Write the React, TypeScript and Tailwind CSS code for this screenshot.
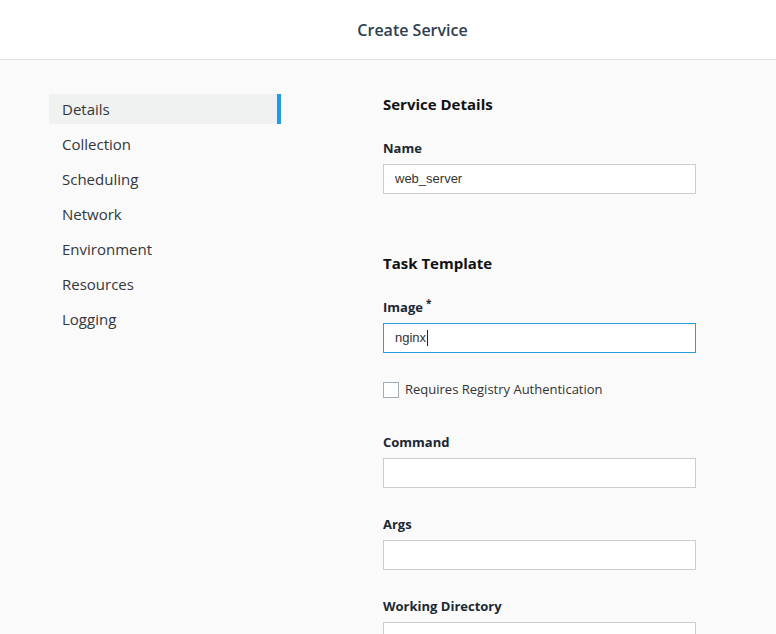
import React from "react";

const nav = ["Details", "Collection", "Scheduling", "Network", "Environment", "Resources", "Logging"];

function Label({ children, mt }: { children: React.ReactNode; mt: string }) {
  return (
    <div className={`${mt} text-[13px] leading-[18px] font-bold text-[#1b2733]`}>{children}</div>
  );
}

function Field({ value, focused }: { value?: string; focused?: boolean }) {
  return (
    <div
      className={`mt-[7px] h-[30px] w-[313px] bg-white flex items-center pl-[11px] text-[13px] text-[#333] ${
        focused ? "border border-[#2d9ae0]" : "border border-[#cccccc]"
      }`}
      style={{ fontFamily: '"Liberation Sans", Arial, sans-serif' }}
    >
      {value}
      {focused && <span className="inline-block w-px h-[16px] bg-[#222] ml-px" />}
    </div>
  );
}

export default function App() {
  return (
    <div
      className="w-[776px] h-[634px] overflow-hidden bg-[#fafafa]"
      style={{ fontFamily: '"Open Sans", "Noto Sans", sans-serif' }}
    >
      <div className="h-[60px] bg-white border-b border-[#e3e3e3] flex items-center justify-center">
        <div className="text-[16px] font-semibold text-[#2e3e50] ml-[49px]">Create Service</div>
      </div>
      <div className="flex pt-[34px]">
        <div className="ml-[49px] w-[232px] flex flex-col gap-[5px]">
          {nav.map((n, i) => (
            <div
              key={n}
              className={`h-[30px] flex items-center pl-[13px] text-[15px] text-[#33373c] ${
                i === 0 ? "bg-[#f0f1f1] border-r-4 border-[#1e9be9]" : ""
              }`}
            >
              {n}
            </div>
          ))}
        </div>
        <div className="ml-[102px] w-[313px]">
          <div className="text-[15px] leading-[20px] font-bold text-[#111]">Service Details</div>
          <Label mt="mt-[25px]">Name</Label>
          <Field value="web_server" />
          <div className="mt-[59px] text-[15px] leading-[20px] font-bold text-[#111]">Task Template</div>
          <Label mt="mt-[25px]">
            Image<sup className="ml-[3px] text-[10px]">*</sup>
          </Label>
          <Field value="nginx" focused />
          <div className="mt-[28px] flex items-center h-[17px]">
            <div className="w-[16px] h-[16px] border border-[#a3abb3] bg-white" />
            <span className="ml-[6px] text-[13px] text-[#333]">Requires Registry Authentication</span>
          </div>
          <Label mt="mt-[35px]">Command</Label>
          <Field />
          <Label mt="mt-[27px]">Args</Label>
          <Field />
          <Label mt="mt-[27px]">Working Directory</Label>
          <Field />
        </div>
      </div>
    </div>
  );
}
